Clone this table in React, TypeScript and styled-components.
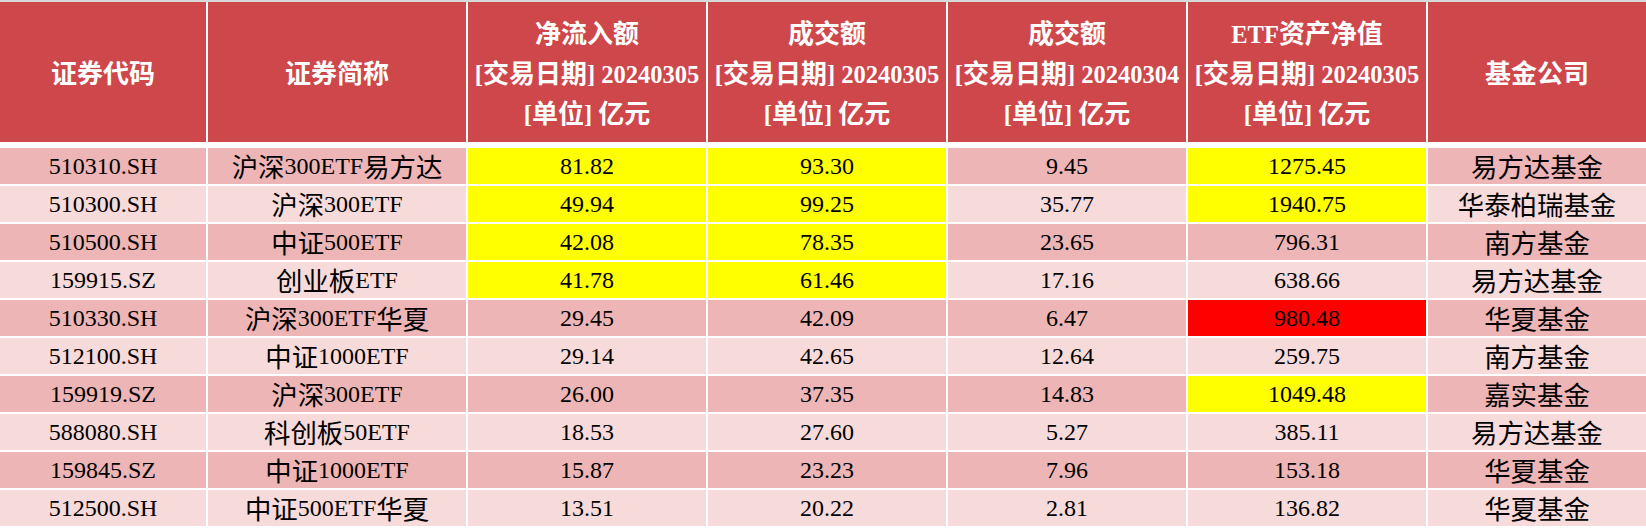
import React from "react";
import styled, { createGlobalStyle } from "styled-components";

const GlobalStyle = createGlobalStyle`
  html, body { margin: 0; padding: 0; background: #ffffff; }
  body { overflow: hidden; }
`;

const COLS = "206px 258px 238px 238px 238px 238px 1fr";

const Page = styled.div`
  width: 1646px;
  height: 528px;
  overflow: hidden;
  border-top: 2px solid #d9d9d9;
  box-sizing: border-box;
  background: #ffffff;
  display: flex;
  flex-direction: column;
  gap: 6px;
  font-family: "Liberation Serif", "Noto Sans CJK SC", serif;
`;

const HeaderRow = styled.div`
  display: grid;
  grid-template-columns: ${COLS};
  column-gap: 2px;
  height: 140px;
`;

const HeaderCell = styled.div`
  background: #ce474a;
  color: #ffffff;
  font-weight: bold;
  font-size: 24.5px;
  line-height: 40px;
  display: flex;
  flex-direction: column;
  align-items: center;
  justify-content: center;
  text-align: center;
  white-space: nowrap;
  padding-top: 5px;
`;

const Body = styled.div`
  display: grid;
  grid-template-columns: ${COLS};
  grid-auto-rows: 36px;
  gap: 2px;
`;

type Tone = "dark" | "light" | "yellow" | "red";

const toneColor: Record<Tone, string> = {
  dark: "#edb5b5",
  light: "#f7dada",
  yellow: "#ffff00",
  red: "#ff0000",
};

const Cell = styled.div<{ $tone: Tone }>`
  background: ${(p) => toneColor[p.$tone]};
  color: #000000;
  font-size: 24px;
  display: flex;
  align-items: center;
  justify-content: center;
  white-space: nowrap;
  padding-top: 1px;
`;

const Han = styled.span<{ $scale: number }>`
  font-family: "Noto Sans CJK SC", sans-serif;
  font-size: ${(p) => p.$scale}em;
  line-height: 1;
`;

function Mixed({ text, scale }: { text: string; scale: number }) {
  const parts = text.split(/([\u4e00-\u9fff]+)/).filter((s) => s.length > 0);
  return (
    <>
      {parts.map((p, i) =>
        /[\u4e00-\u9fff]/.test(p) ? (
          <Han key={i} $scale={scale}>
            {p}
          </Han>
        ) : (
          <React.Fragment key={i}>{p}</React.Fragment>
        )
      )}
    </>
  );
}

const headers: string[][] = [
  ["证券代码"],
  ["证券简称"],
  ["净流入额", "[交易日期] 20240305", "[单位] 亿元"],
  ["成交额", "[交易日期] 20240305", "[单位] 亿元"],
  ["成交额", "[交易日期] 20240304", "[单位] 亿元"],
  ["ETF资产净值", "[交易日期] 20240305", "[单位] 亿元"],
  ["基金公司"],
];

type Row = { cells: string[]; hl?: Record<number, Tone> };

const rows: Row[] = [
  { cells: ["510310.SH", "沪深300ETF易方达", "81.82", "93.30", "9.45", "1275.45", "易方达基金"], hl: { 2: "yellow", 3: "yellow", 5: "yellow" } },
  { cells: ["510300.SH", "沪深300ETF", "49.94", "99.25", "35.77", "1940.75", "华泰柏瑞基金"], hl: { 2: "yellow", 3: "yellow", 5: "yellow" } },
  { cells: ["510500.SH", "中证500ETF", "42.08", "78.35", "23.65", "796.31", "南方基金"], hl: { 2: "yellow", 3: "yellow" } },
  { cells: ["159915.SZ", "创业板ETF", "41.78", "61.46", "17.16", "638.66", "易方达基金"], hl: { 2: "yellow", 3: "yellow" } },
  { cells: ["510330.SH", "沪深300ETF华夏", "29.45", "42.09", "6.47", "980.48", "华夏基金"], hl: { 5: "red" } },
  { cells: ["512100.SH", "中证1000ETF", "29.14", "42.65", "12.64", "259.75", "南方基金"] },
  { cells: ["159919.SZ", "沪深300ETF", "26.00", "37.35", "14.83", "1049.48", "嘉实基金"], hl: { 5: "yellow" } },
  { cells: ["588080.SH", "科创板50ETF", "18.53", "27.60", "5.27", "385.11", "易方达基金"] },
  { cells: ["159845.SZ", "中证1000ETF", "15.87", "23.23", "7.96", "153.18", "华夏基金"] },
  { cells: ["512500.SH", "中证500ETF华夏", "13.51", "20.22", "2.81", "136.82", "华夏基金"] },
];

export default function App() {
  return (
    <>
      <GlobalStyle />
      <Page>
        <HeaderRow>
          {headers.map((lines, i) => (
            <HeaderCell key={i}>
              {lines.map((l, j) => (
                <div key={j}>
                  <Mixed text={l} scale={1.06} />
                </div>
              ))}
            </HeaderCell>
          ))}
        </HeaderRow>
        <Body>
          {rows.map((r, ri) =>
            r.cells.map((c, ci) => {
              const base: Tone = ri % 2 === 0 ? "dark" : "light";
              const tone = (r.hl && r.hl[ci]) || base;
              return (
                <Cell key={`${ri}-${ci}`} $tone={tone}>
                  <Mixed text={c} scale={1.1} />
                </Cell>
              );
            })
          )}
        </Body>
      </Page>
    </>
  );
}
